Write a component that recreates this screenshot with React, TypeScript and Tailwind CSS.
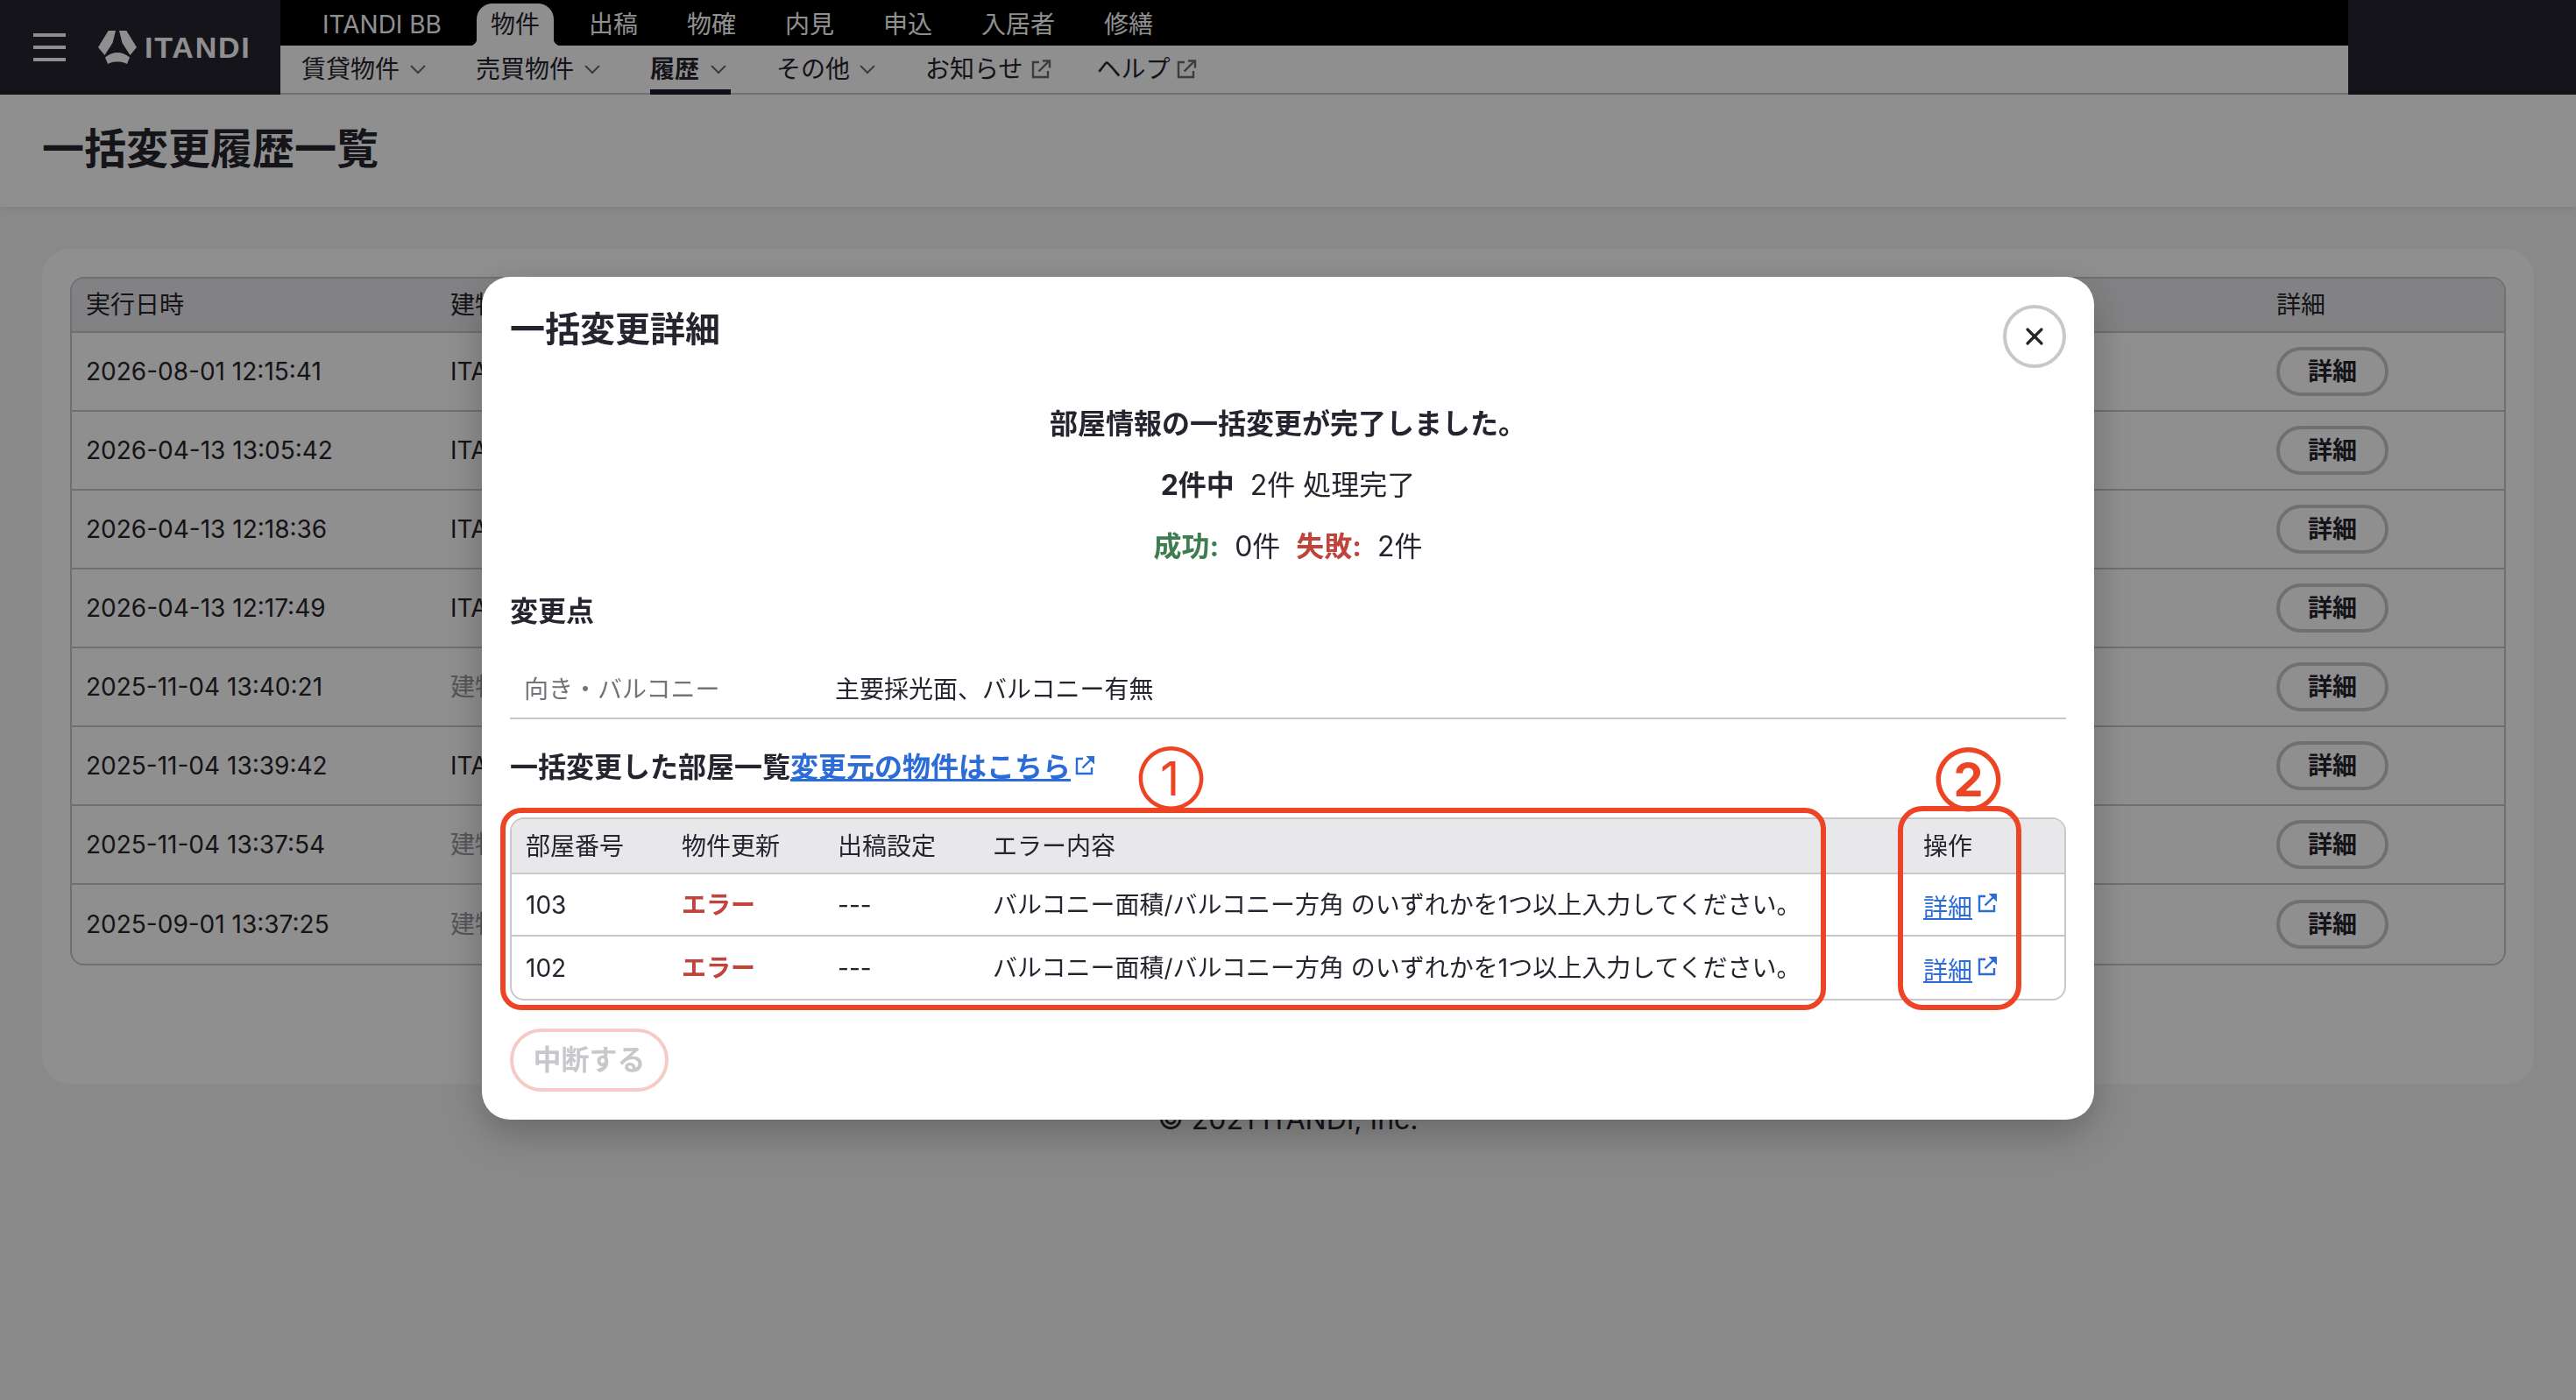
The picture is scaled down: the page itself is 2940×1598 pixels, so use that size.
import React from 'react';
import { X } from 'lucide-react';

const font = "font-['Inter','Noto_Sans_CJK_JP',sans-serif]";

const historyRows = [
  { date: '2026-08-01 12:15:41', name: 'ITANDI管理物件', muted: false },
  { date: '2026-04-13 13:05:42', name: 'ITANDI管理物件', muted: false },
  { date: '2026-04-13 12:18:36', name: 'ITANDI管理物件', muted: false },
  { date: '2026-04-13 12:17:49', name: 'ITANDI管理物件', muted: false },
  { date: '2025-11-04 13:40:21', name: '建物名なし', muted: true },
  { date: '2025-11-04 13:39:42', name: 'ITANDI管理物件', muted: false },
  { date: '2025-11-04 13:37:54', name: '建物名なし', muted: true },
  { date: '2025-09-01 13:37:25', name: '建物名なし', muted: true },
];

const topTabs = ['出稿', '物確', '内見', '申込', '入居者', '修繕'];

// 外部リンクのアイコン
function ExternalIcon({ className, solid }: { className?: string; solid?: boolean }) {
  return (
    <svg viewBox="0 0 24 24" fill="none" className={className}>
      <path d="M10 4H3v17h17v-7" stroke="currentColor" strokeWidth="2.4" />
      <path d="M9.5 14.5 21 3" stroke="currentColor" strokeWidth="2.4" />
      {solid ? (
        <path d="M13.5 1H23V10.5Z" fill="currentColor" />
      ) : (
        <path d="M14 2.5H22V10.5" stroke="currentColor" strokeWidth="2.4" />
      )}
    </svg>
  );
}

function Chevron() {
  return (
    <svg viewBox="0 0 20 12" fill="none" className="h-[12px] w-[20px] text-[#6c6a72]">
      <path d="M2 2l8 8 8-8" stroke="currentColor" strokeWidth="2" />
    </svg>
  );
}

function Logo() {
  return (
    <div className="ml-[37px] flex items-center gap-[9px]">
      <svg viewBox="0 0 44 38" className="h-[38px] w-[44px] text-white">
        <path fill="currentColor" d="M11.7 0H20L16.5 14 7.5 28 0 19Z" />
        <path fill="currentColor" d="M32.3 0H24L27.5 14 36.5 28 44 19Z" />
        <path fill="currentColor" d="M8 30.5C12 27 17 25 22 25S32 27 36 30.5L33 38C29 36 26 35.5 22 35.5S15 36 11 38Z" />
      </svg>
      <span className="text-[34px] leading-none font-bold tracking-[1.8px] text-white font-['Liberation_Sans',sans-serif]">
        ITANDI
      </span>
    </div>
  );
}

function Header() {
  return (
    <header className="flex h-[108px] bg-[#282430]">
      <div className="flex w-[320px] shrink-0 items-center pl-[38px]">
        <div className="flex w-[37px] flex-col gap-[10px]">
          <span className="h-[4px] bg-white" />
          <span className="h-[4px] bg-white" />
          <span className="h-[4px] bg-white" />
        </div>
        <Logo />
      </div>
      <div className="flex w-[2360px] flex-col">
        <nav className="flex h-[52px] items-end gap-[24px] bg-black pl-[32px] text-[28px] text-white">
          <span className="flex h-[48px] items-center px-[16px]">ITANDI BB</span>
          <span className="relative flex h-[48px] items-center rounded-t-[18px] bg-white px-[16px] text-[#26242e] before:absolute before:bottom-0 before:left-[-8px] before:h-[8px] before:w-[8px] before:bg-[radial-gradient(circle_at_0_0,transparent_8px,white_8.5px)] after:absolute after:right-[-8px] after:bottom-0 after:h-[8px] after:w-[8px] after:bg-[radial-gradient(circle_at_100%_0,transparent_8px,white_8.5px)]">
            物件
          </span>
          {topTabs.map((tab) => (
            <span key={tab} className="flex h-[48px] items-center px-[16px]">
              {tab}
            </span>
          ))}
        </nav>
        <nav className="flex h-[56px] items-stretch border-b-2 border-[#c8c8cc] bg-white pl-[24px] text-[28px] text-[#26242e]">
          <span className="flex items-center gap-[11px]">
            賃貸物件 <Chevron />
          </span>
          <span className="ml-[56px] flex items-center gap-[11px]">
            売買物件 <Chevron />
          </span>
          <span className="relative ml-[56px] flex items-center gap-[12px] font-bold">
            履歴 <Chevron />
            <span className="absolute right-[-4px] bottom-[-2px] left-0 h-[6px] bg-[#1c1a2b]" />
          </span>
          <span className="ml-[56px] flex items-center gap-[10px]">
            その他 <Chevron />
          </span>
          <span className="ml-[56px] flex items-center gap-[8px]">
            お知らせ <ExternalIcon className="h-[24px] w-[24px] text-[#6c6a72]" />
          </span>
          <span className="ml-[52px] flex items-center gap-[6px]">
            ヘルプ <ExternalIcon className="h-[24px] w-[24px] text-[#6c6a72]" />
          </span>
        </nav>
      </div>
    </header>
  );
}

function HistoryTable() {
  return (
    <div className="overflow-hidden rounded-[16px] border-2 border-[#c8c8cc] text-[#26242e]">
      <div className="grid h-[62px] grid-cols-[416px_1fr_260px] items-center border-b-2 border-[#c8c8cc] bg-[#e8e8eb] pl-[16px] text-[28px]">
        <span>実行日時</span>
        <span>建物名</span>
        <span>詳細</span>
      </div>
      {historyRows.map((row) => (
        <div
          key={row.date}
          className="grid h-[90px] grid-cols-[416px_1fr_260px] items-center border-b-2 border-[#c8c8cc] pl-[16px] text-[28px] last:border-b-0"
        >
          <span>{row.date}</span>
          <span className={row.muted ? 'text-[#9a98a0]' : ''}>{row.name}</span>
          <span>
            <button className="h-[56px] w-[128px] rounded-full border-4 border-[#c8c8cc] text-[28px] font-bold">
              詳細
            </button>
          </span>
        </div>
      ))}
    </div>
  );
}

function ResultTable() {
  const rows = ['103', '102'];
  return (
    <div className="overflow-hidden rounded-[16px] border-2 border-[#c8c8cc] text-[28px] text-[#26242e]">
      <div className="grid h-[63px] grid-cols-[178px_178px_177px_1fr_177px] items-center border-b-2 border-[#c8c8cc] bg-[#e8e8eb] [&>span]:pl-[16px]">
        <span>部屋番号</span>
        <span>物件更新</span>
        <span>出稿設定</span>
        <span>エラー内容</span>
        <span>操作</span>
      </div>
      {rows.map((room) => (
        <div
          key={room}
          className="grid h-[71px] grid-cols-[178px_178px_177px_1fr_177px] items-center border-b-2 border-[#c8c8cc] last:border-b-0 [&>span]:pl-[16px]"
        >
          <span>{room}</span>
          <span className="font-bold text-[#c0443c]">エラー</span>
          <span>---</span>
          <span className="whitespace-nowrap">バルコニー面積/バルコニー方角 のいずれかを1つ以上入力してください。</span>
          <span className="flex items-start">
            <a className="mt-[6px] text-[#2b6cd6] underline">詳細</a>
            <ExternalIcon solid className="mt-[10px] ml-[5px] h-[24px] w-[24px] text-[#2b6cd6]" />
          </span>
        </div>
      ))}
    </div>
  );
}

function DetailModal() {
  return (
    <div className="relative h-[962px] w-[1840px] rounded-[32px] bg-white p-[32px] text-[#26242e] shadow-[0_16px_48px_rgba(0,0,0,0.25)]">
      <div className="flex items-start justify-between">
        <h2 className="text-[40px] leading-[56px] font-bold">一括変更詳細</h2>
        <button className="flex h-[72px] w-[72px] items-center justify-center rounded-full border-4 border-[#c8c8cc]">
          <X size={32} strokeWidth={2.4} />
        </button>
      </div>

      <div className="mt-[40px] flex flex-col items-center gap-[22px] text-[32px] leading-[48px]">
        <p className="font-bold">部屋情報の一括変更が完了しました。</p>
        <p>
          <span className="font-bold">2件中</span>&nbsp; 2件 処理完了
        </p>
        <p>
          <span className="font-bold text-[#3f7d50]">成功:</span>&nbsp; 0件&nbsp;{' '}
          <span className="font-bold text-[#c0443c]">失敗:</span>&nbsp; 2件
        </p>
      </div>

      <h3 className="mt-[26px] text-[32px] leading-[48px] font-bold">変更点</h3>
      <div className="mt-[32px] flex h-[67px] items-center border-b-2 border-[#c8c8cc] pl-[16px] text-[28px]">
        <span className="w-[355px] text-[#74727a]">向き・バルコニー</span>
        <span>主要採光面、バルコニー有無</span>
      </div>

      <div className="mt-[31px] flex items-start text-[32px] leading-[48px] font-bold">
        <span>一括変更した部屋一覧</span>
        <a className="text-[#2b6cd6] underline">変更元の物件はこちら</a>
        <ExternalIcon solid className="mt-[10px] ml-[4px] h-[24px] w-[24px] text-[#2b6cd6]" />
      </div>

      <div className="mt-[33px]">
        <ResultTable />
      </div>

      <button className="mt-[32px] h-[72px] w-[181px] rounded-full border-4 border-[#f6cbc6] text-[32px] font-bold text-[#c8c8cc]">
        中断する
      </button>

      {/* 赤い注釈 */}
      <span className="absolute top-[546px] left-[749px] text-[54px] leading-none text-[#ec4424]">①</span>
      <span className="absolute top-[547px] left-[1659px] text-[54px] leading-none font-bold text-[#ec4424]">②</span>
      <div className="absolute top-[606px] left-[21px] h-[231px] w-[1513px] rounded-[24px] border-[6px] border-[#ec4424]" />
      <div className="absolute top-[604px] left-[1616px] h-[233px] w-[141px] rounded-[28px] border-[6px] border-[#ec4424]" />
    </div>
  );
}

export default function App() {
  return (
    <div className={`relative min-h-screen bg-[#f5f5f7] ${font}`}>
      <Header />
      <div className="flex h-[128px] items-center bg-white pb-[4px] pl-[48px] shadow-[0_2px_8px_rgba(0,0,0,0.08)]">
        <h1 className="text-[48px] font-bold text-[#26242e]">一括変更履歴一覧</h1>
      </div>
      <main className="mx-[48px] mt-[48px] h-[953px] rounded-[32px] bg-white p-[32px]">
        <HistoryTable />
      </main>
      <footer className="mt-[17px] text-center text-[32px] leading-[48px] text-[#26242e]">© 2021 ITANDI, Inc.</footer>

      <div className="fixed inset-0 flex justify-center bg-black/44 pt-[316px]">
        <DetailModal />
      </div>
    </div>
  );
}
